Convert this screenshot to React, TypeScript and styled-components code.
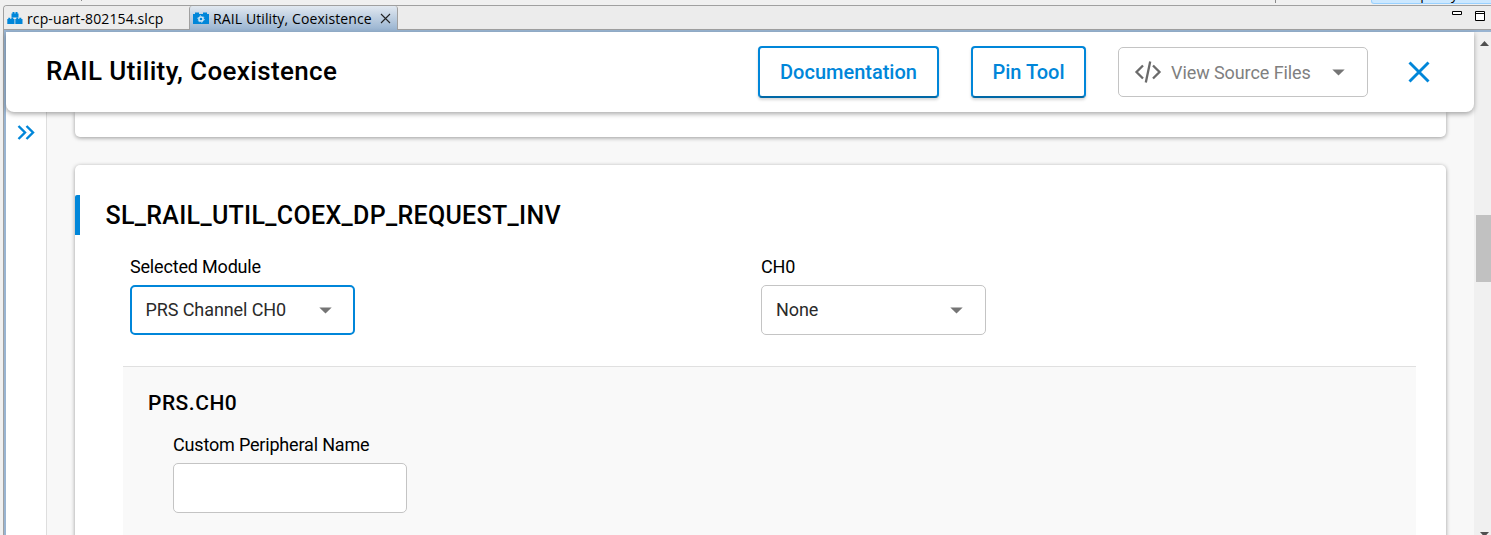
import React from 'react';
import styled, { createGlobalStyle } from 'styled-components';

const BLUE = '#0086d9';

const GlobalStyle = createGlobalStyle`
  * { box-sizing: border-box; }
  html, body { margin: 0; height: 100%; overflow: hidden; }
  body { font-family: Roboto, "Liberation Sans", sans-serif; background: #f0f0f0; color: #000; }
`;

const Window = styled.div`
  width: 1491px;
  height: 535px;
  display: flex;
  flex-direction: column;
  overflow: hidden;
  background: #f0f0f0;
`;

const Toolbar = styled.div`
  height: 5px;
  flex: none;
  display: flex;
  align-items: flex-start;
`;

const Divider = styled.span<{ $left: number; $height: number }>`
  width: 1px;
  flex: none;
  height: ${p => p.$height}px;
  margin-left: ${p => p.$left}px;
  background: #8a8a8a;
`;

const PerspectiveButton = styled.span`
  display: flex;
  align-items: flex-end;
  width: 140px;
  height: 4px;
  flex: none;
  margin-left: 95px;
  padding: 0 0 1px 24px;
  border: 1px solid #99d1ff;
  border-top: 0;
  border-radius: 0 0 0 3px;
  background: #cce8ff;
  font: 14px/16px "Open Sans", "Noto Sans", sans-serif;
`;

const EditorStack = styled.div`
  flex: 1;
  min-height: 0;
  margin-left: 3px;
  display: flex;
  flex-direction: column;
  border-left: 1px solid #a0a0a0;
  border-top: 1px solid #a0a0a0;
  border-top-left-radius: 4px;
`;

const TabStrip = styled.div`
  height: 24px;
  flex: none;
  display: flex;
  background: #ececec;
  border-bottom: 1px solid #a0a0a0;
  border-top-left-radius: 3px;
`;

const Tab = styled.div<{ $active?: boolean; $width: number }>`
  width: ${p => p.$width}px;
  height: ${p => (p.$active ? 24 : 23)}px;
  display: flex;
  align-items: center;
  padding-left: 3px;
  font: 14px/20px "Open Sans", "Noto Sans", sans-serif;
  white-space: nowrap;
  ${p => p.$active && `
    border-left: 1px solid #a0a0a0;
    border-right: 1px solid #a0a0a0;
    border-top-left-radius: 3px;
    border-top-right-radius: 3px;
    background: linear-gradient(#e1e8f0, #99b4d1);
  `}
`;

const TabLabel = styled.span<{ $width: number }>`
  width: ${p => p.$width}px;
  margin-left: 4px;
  letter-spacing: 0.11px;
  padding-top: 2px;
`;

const StripControls = styled.div`
  margin-left: auto;
  display: flex;
  gap: 13px;
  padding: 5px 6px 0 0;
`;

const EditorBody = styled.div`
  flex: 1;
  min-height: 0;
  display: flex;
  border-left: 2px solid #99b4d1;
  border-top: 2px solid #99b4d1;
`;

const Page = styled.div`
  width: 1468px;
  display: flex;
  flex-direction: column;
  background: #f8f8f8;
`;

const Header = styled.header`
  position: relative;
  z-index: 1;
  height: 80px;
  flex: none;
  display: flex;
  align-items: center;
  padding: 0 44px 0 40px;
  background: #fff;
  border-radius: 0 0 8px 8px;
  box-shadow: 0 2px 5px rgba(0, 0, 0, 0.34);
`;

const Title = styled.h1`
  flex: 1;
  margin: 0;
  padding-bottom: 2px;
  font-size: 26px;
  line-height: 32px;
  font-weight: 500;
  letter-spacing: 0.36px;
`;

const OutlineButton = styled.button<{ $width: number }>`
  width: ${p => p.$width}px;
  height: 52px;
  margin-right: 32px;
  padding: 0;
  border: 2px solid ${BLUE};
  border-bottom-color: #0068a6;
  border-radius: 4px;
  background: #fff;
  color: ${BLUE};
  font: 500 20px/24px Roboto, sans-serif;
  box-shadow: 0 2px 3px rgba(0, 0, 0, 0.16);
`;

const Select = styled.div<{ $width: number; $active?: boolean; $muted?: boolean }>`
  width: ${p => p.$width}px;
  height: 50px;
  display: flex;
  align-items: center;
  justify-content: space-between;
  padding: ${p => (p.$active ? '0 21px 0 13.5px' : p.$muted ? '0 22px 0 15px' : '0 22px 0 14px')};
  border: ${p => (p.$active ? `2px solid ${BLUE}` : '1px solid #c4c4c4')};
  border-radius: 5px;
  background: #fff;
  color: ${p => (p.$muted ? '#757575' : '#2a2a2a')};
  font-size: 18px;
`;

const SelectValue = styled.span`
  padding-bottom: 1px;
  letter-spacing: -0.09px;
`;

const SourceLabel = styled.span`
  flex: 1;
  margin-left: 9px;
  font-size: 18px;
  letter-spacing: -0.08px;
  color: #808080;
`;

const CloseIcon = styled.svg`
  margin-left: 40px;
`;

const Columns = styled.div`
  flex: 1;
  min-height: 0;
  display: flex;
`;

const SideRail = styled.aside`
  width: 41px;
  flex: none;
  padding: 12.5px 0 0 11px;
  background: #fff;
  border-right: 1px solid #dedede;
`;

const Main = styled.main`
  flex: 1;
  display: flex;
  flex-direction: column;
  gap: 28px;
  padding: 0 28px;
  overflow: hidden;
`;

const Card = styled.section<{ $tail?: boolean }>`
  flex: none;
  height: ${p => (p.$tail ? '25px' : '420px')};
  padding-top: ${p => (p.$tail ? 0 : '30px')};
  background: #fff;
  border-radius: ${p => (p.$tail ? '0 0 5px 5px' : '5px')};
  box-shadow: 0 1px 4px rgba(0, 0, 0, 0.38);
`;

const CardTitle = styled.h2`
  height: 40px;
  margin: 0;
  padding-left: 25.5px;
  border-left: 5px solid ${BLUE};
  border-top-left-radius: 2px;
  font-size: 25px;
  line-height: 41px;
  font-weight: 500;
  letter-spacing: 0.31px;
`;

const FieldRow = styled.div`
  display: flex;
  padding: 20px 0 0 55px;
`;

const Field = styled.div<{ $width?: number }>`
  width: ${p => (p.$width ? `${p.$width}px` : 'auto')};
`;

const Label = styled.label`
  display: block;
  height: 24px;
  margin-bottom: 6px;
  font-size: 18px;
  line-height: 24px;
  letter-spacing: -0.18px;
`;

const Panel = styled.div`
  height: 240px;
  margin: 31px 30px 0 48px;
  padding: 22px 25px;
  border-top: 1px solid #e0e0e0;
  background: #f9f9f9;
`;

const PanelTitle = styled.h3`
  margin: 0;
  font-size: 21px;
  line-height: 28px;
  font-weight: 500;
  letter-spacing: 0.5px;
`;

const PanelField = styled.div`
  padding: 16px 0 0 25px;
`;

const TextInput = styled.input`
  display: block;
  width: 234px;
  height: 50px;
  border: 1px solid #c4c4c4;
  border-radius: 5px;
  background: #fff;
`;

const ScrollTrack = styled.div`
  flex: 1;
  display: flex;
  flex-direction: column;
  align-items: flex-end;
  padding-top: 8px;
  background: #f0f0f0;
`;

const ScrollThumb = styled.div`
  width: 15px;
  height: 67px;
  flex: none;
  margin: 168px 0 249px;
  background: #c1c1c1;
`;

const ArrowIcon = styled.svg`
  display: block;
  flex: none;
  margin-right: 1px;
`;

const ScrollArrow = ({ down }: { down?: boolean }) => (
  <ArrowIcon width="11" height="7" viewBox="0 0 11 7">
    <path d={down ? 'M1 1h9L5.5 6z' : 'M1 6h9L5.5 1z'} fill="#505050" />
  </ArrowIcon>
);

const Caret = () => (
  <svg width="13" height="7" viewBox="0 0 13 7">
    <path d="M.3.5h12.4L6.5 6.6z" fill="#757575" />
  </svg>
);

const ProjectIcon = () => (
  <svg width="16" height="12" viewBox="0 0 16 12">
    <path d="M4.500 1.500h1V0h2v1.500h1V0h2v1.500h1V5.500h-7zM.3 7h1V5.800h2V7h1V5.800h2V7h1.200v5H.3zM8.300 7h1V5.800h2V7h1V5.800h2V7h1.200v5H8.300z" fill={BLUE} />
  </svg>
);

const ComponentIcon = () => (
  <svg width="16" height="12" viewBox="0 0 16 12">
    <path d="M0 2h2V.5h4V2h4V.5h4V2h2v10H0z" fill={BLUE} />
    <circle cx="8" cy="7" r="2.1" fill="none" stroke="#d5e9f7" strokeWidth="1.5" />
    <circle cx="8" cy="7" r="3.2" fill="none" stroke="#d5e9f7" strokeWidth="1" strokeDasharray="1.3 2.05" />
  </svg>
);

export default function App() {
  return (
    <Window>
      <GlobalStyle />
      <Toolbar>
        <Divider $left={81} $height={1} />
        <Divider $left={1193} $height={3} />
        <PerspectiveButton>Simplicity</PerspectiveButton>
      </Toolbar>
      <EditorStack>
        <TabStrip>
          <Tab $width={185}>
            <ProjectIcon />
            <TabLabel $width={140}>rcp-uart-802154.slcp</TabLabel>
          </Tab>
          <Tab $width={209} $active>
            <ComponentIcon />
            <TabLabel $width={167}>RAIL Utility, Coexistence</TabLabel>
            <svg width="11" height="11" viewBox="0 0 11 11">
              <path d="M1 1l9 9M10 1l-9 9" stroke="#222" strokeWidth="1.1" />
            </svg>
          </Tab>
          <StripControls>
            <svg width="10" height="11" viewBox="0 0 10 11">
              <path d="M.5.5h9v3h-9z" fill="#fff" stroke="#000" />
            </svg>
            <svg width="10" height="11" viewBox="0 0 10 11">
              <path d="M.5.5h9v9h-9zM0 2.5h10" fill="#fff" stroke="#000" />
            </svg>
          </StripControls>
        </TabStrip>
        <EditorBody>
          <Page>
            <Header>
              <Title>RAIL Utility, Coexistence</Title>
              <OutlineButton $width={181}>Documentation</OutlineButton>
              <OutlineButton $width={115}>Pin Tool</OutlineButton>
              <Select $width={250} $muted>
                <svg width="28" height="24" viewBox="0 0 28 24">
                  <path d="M9 5.500L2.500 12l6.500 6.500M19 5.500L25.500 12l-6.500 6.500M16.200 1.500l-4.400 21" fill="none" stroke="#6b6b6b" strokeWidth="2.3" />
                </svg>
                <SourceLabel>View Source Files</SourceLabel>
                <Caret />
              </Select>
              <CloseIcon width="22" height="22" viewBox="0 0 22 22">
                <path d="M1.500 1.500l19 19M20.500 1.500l-19 19" stroke={BLUE} strokeWidth="2.9" />
              </CloseIcon>
            </Header>
            <Columns>
              <SideRail>
                <svg width="18" height="15" viewBox="0 0 18 15">
                  <path d="M1.500 1l6.500 6.500L1.500 14M9.500 1l6.500 6.500L9.500 14" fill="none" stroke={BLUE} strokeWidth="2.4" />
                </svg>
              </SideRail>
              <Main>
                <Card $tail />
                <Card>
                  <CardTitle>SL_RAIL_UTIL_COEX_DP_REQUEST_INV</CardTitle>
                  <FieldRow>
                    <Field $width={631}>
                      <Label>Selected Module</Label>
                      <Select $width={225} $active><SelectValue>PRS Channel CH0</SelectValue><Caret /></Select>
                    </Field>
                    <Field>
                      <Label>CH0</Label>
                      <Select $width={225}><SelectValue>None</SelectValue><Caret /></Select>
                    </Field>
                  </FieldRow>
                  <Panel>
                    <PanelTitle>PRS.CH0</PanelTitle>
                    <PanelField>
                      <Label htmlFor="peripheral">Custom Peripheral Name</Label>
                      <TextInput id="peripheral" />
                    </PanelField>
                  </Panel>
                </Card>
              </Main>
            </Columns>
          </Page>
          <ScrollTrack>
            <ScrollArrow />
            <ScrollThumb />
            <ScrollArrow down />
          </ScrollTrack>
        </EditorBody>
      </EditorStack>
    </Window>
  );
}
